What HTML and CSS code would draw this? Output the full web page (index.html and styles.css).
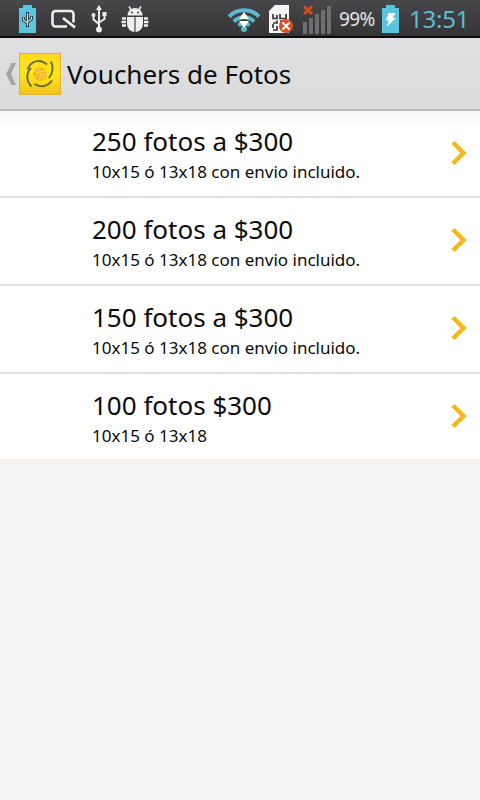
FILE: index.html
```html
<!DOCTYPE html>
<html lang="es">
<head>
  <meta charset="UTF-8">
  <meta name="viewport" content="width=device-width, initial-scale=1.0">
  <title>Vouchers de Fotos</title>
  <link rel="stylesheet" href="styles.css">
</head>
<body>

<div class="statusbar">
  <svg class="usb-battery" width="17" height="28" viewBox="0 0 17 28">
    <path d="M4 0h9v3h4v25H0V3h4z" fill="#5cc4dc"/>
    <g fill="none" stroke="#20363c" stroke-width="3"><path d="M8.500 7v15M4.500 12v3l4 3M12.500 11v3l-4 3"/></g>
    <g fill="none" stroke="#b9e6ee" stroke-width="1.200"><path d="M8.500 8v13M4.500 12.500V15l4 3M12.500 11.500V14l-4 3"/></g>
  </svg>
  <svg class="qmemo" width="26" height="20" viewBox="0 0 26 20">
    <path d="M16 17.500H4.500a3 3 0 0 1-3-3V5a3 3 0 0 1 3-3h15a3 3 0 0 1 3 3v8.500" fill="none" stroke="#eee" stroke-width="2.600"/>
    <path d="M12 9l12 9.500" stroke="#eee" stroke-width="2.800"/>
  </svg>
  <svg class="usb" width="16" height="28" viewBox="0 0 16 28">
    <path d="M8 4v20M2.500 10v4.500L8 19M13.500 9v5L8 17.500" fill="none" stroke="#eee" stroke-width="2"/>
    <path d="M8 0l3 5H5z" fill="#eee"/>
    <circle cx="2.500" cy="10" r="2" fill="#eee"/>
    <path d="M11.500 7h4v4h-4z" fill="#eee"/>
    <circle cx="8" cy="24.500" r="2.900" fill="#eee"/>
  </svg>
  <svg class="debug" width="28" height="27" viewBox="0 0 28 27">
    <path d="M6.500 9.500a7.500 7.500 0 0 1 15 0z" fill="#eee"/>
    <path d="M8 .5l2.500 4M20 .5l-2.500 4" stroke="#eee" stroke-width="1.500"/>
    <circle cx="11" cy="6.500" r="1" fill="#444"/><circle cx="17" cy="6.500" r="1" fill="#444"/>
    <path d="M6 11h16v7a8 8 0 0 1-16 0z" fill="#eee"/>
    <path d="M14 11v15" stroke="#444" stroke-width="1.200"/>
    <path d="M1 12.500h4M.5 16h4.500M1 19.500h4M23 12.500h4M23 16h4.500M23 19.500h4" stroke="#eee" stroke-width="2.300"/>
  </svg>
  <svg class="wifi" width="34" height="28" viewBox="0 0 34 28">
    <g fill="none" stroke="#5cb9cf" stroke-width="4">
      <path d="M2 11.500a21 21 0 0 1 30 0"/>
      <path d="M7 16.500a14 14 0 0 1 20 0"/>
      <path d="M11.500 20.500a8 8 0 0 1 11 0"/>
    </g>
    <circle cx="17" cy="24" r="3" fill="#5cb9cf"/>
    <path d="M17 7l5 7H12zM12 16h10l-5 7z" fill="#fff"/>
  </svg>
  <svg class="sim" width="24" height="29" viewBox="0 0 24 29">
    <path d="M6 0h14v28H0V6z" fill="#f4f4f4"/>
    <path d="M4 9v4.500h4V10M11 9v4.500h6V9M4 18h4v-2.500M11 16h6M4 19v4M8 21v4H4" fill="none" stroke="#38383b" stroke-width="1.700"/>
    <circle cx="17" cy="21" r="7" fill="#e24a22"/>
    <path d="M13.500 17.500l7 7M20.500 17.500l-7 7" stroke="#fff" stroke-width="2"/>
  </svg>
  <svg class="signal" width="28" height="29" viewBox="0 0 28 29">
    <path d="M0 17h4v12H0zM6 13h4v16H6zM12 9h4v20h-4zM18 5h4v24h-4zM24 1h4v28h-4z" fill="#6e6e70"/>
    <path d="M1 1.500l8 7.500M9 1.500L1 9" stroke="#df4a25" stroke-width="3"/>
  </svg>
  <span class="percent">99%</span>
  <svg class="battery" width="17" height="28" viewBox="0 0 17 28">
    <path d="M4 0h9v3h4v25H0V3h4z" fill="#5cc4dc"/>
    <path d="M6.500 8h7l-3 5H14L4.500 22l2.500-6.500H4z" fill="#fff"/>
  </svg>
  <span class="clock">13:51</span>
</div>

<header class="header">
  <svg class="back" width="10" height="22" viewBox="0 0 10 22">
    <path d="M5.500 0H10L5 11l5 11H5.500L0 11z" fill="#a5a4a6"/>
  </svg>
  <svg class="logo" width="42" height="42" viewBox="0 0 42 42">
    <defs>
      <linearGradient id="gold" x1="0" y1="0" x2="0" y2="1">
        <stop offset="0" stop-color="#ffd91f"/>
        <stop offset=".45" stop-color="#ffe817"/>
        <stop offset="1" stop-color="#f5c21c"/>
      </linearGradient>
    </defs>
    <rect x=".5" y=".5" width="41" height="41" fill="url(#gold)" stroke="#dfb52c"/>
    <circle cx="21" cy="21" r="6.800" fill="#f9b420"/>
    <path d="M20 14.500l-1 5 8-2M27.500 22l-6-1-1 6.500M15 25l4-4-4-4M23 22l2 4" fill="none" stroke="#ffe45a" stroke-width="1"/>
    <g fill="none" stroke="#6b6b3c" stroke-width="2">
      <path d="M32 8.500Q36 17 30 25"/>
      <path d="M33 27.500C29 33.500 21 35 15.500 31"/>
      <path d="M12.500 33.500C7 28 7 20 12 15"/>
      <path d="M8.500 16.500C11.500 8 21 5 28 11.500"/>
    </g>
  </svg>
  <h1>Vouchers de Fotos</h1>
</header>

<ul class="list">
  <li class="item">
    <div class="info">
      <h2>250 fotos a $300</h2>
      <p>10x15 ó 13x18 con envio incluido.</p>
    </div>
    <svg class="arrow" width="17" height="26" viewBox="0 0 17 26"><path d="M2 2.500L12.500 13 2 23.500"/></svg>
  </li>
  <li class="item">
    <div class="info">
      <h2>200 fotos a $300</h2>
      <p>10x15 ó 13x18 con envio incluido.</p>
    </div>
    <svg class="arrow" width="17" height="26" viewBox="0 0 17 26"><path d="M2 2.500L12.500 13 2 23.500"/></svg>
  </li>
  <li class="item">
    <div class="info">
      <h2>150 fotos a $300</h2>
      <p>10x15 ó 13x18 con envio incluido.</p>
    </div>
    <svg class="arrow" width="17" height="26" viewBox="0 0 17 26"><path d="M2 2.500L12.500 13 2 23.500"/></svg>
  </li>
  <li class="item">
    <div class="info">
      <h2>100 fotos $300</h2>
      <p>10x15 ó 13x18</p>
    </div>
    <svg class="arrow" width="17" height="26" viewBox="0 0 17 26"><path d="M2 2.500L12.500 13 2 23.500"/></svg>
  </li>
</ul>

</body>
</html>
```
FILE: styles.css
```css
* {
  box-sizing: border-box;
}
body {
  margin: 0;
  min-height: 100vh;
  font-family: "Noto Sans", "Open Sans", sans-serif;
  color: #0b0b0b;
  background-color: #f5f4f2;
}
h1, h2, p, ul {
  margin: 0;
  padding: 0;
  font-weight: normal;
}
svg {
  display: block;
  flex: none;
}

/* Status bar */
.statusbar {
  display: flex;
  align-items: center;
  height: 38px;
  padding: 2px 0 0 19px;
  background: linear-gradient(#48484b, #343437);
  border-bottom: 2px solid #0c0c0c;
}
.qmemo {
  margin-left: 15px;
}
.usb {
  margin-left: 14px;
}
.debug {
  margin-left: 14px;
}
.wifi {
  margin-left: 78px;
}
.sim {
  margin-left: 8px;
}
.signal {
  margin-left: 10px;
}
.percent {
  width: 37px;
  margin-left: 8px;
  color: #e4e4e4;
  font-size: 19px;
  letter-spacing: -0.6px;
}
.battery {
  margin-left: 6px;
}
.clock {
  margin-left: 10px;
  padding-bottom: 2px;
  color: #5cbcd3;
  font-size: 24px;
  letter-spacing: -0.2px;
}

/* Title bar */
.header {
  display: flex;
  align-items: center;
  height: 73px;
  padding: 0 0 0 6px;
  background: linear-gradient(#dfdee0, #dbdadc);
  border-bottom: 2px solid #bdbcbe;
}
.logo {
  margin-left: 3px;
}
.header h1 {
  margin-left: 6px;
  font-size: 26px;
  white-space: nowrap;
}

/* Voucher list */
.list {
  list-style: none;
}
.item {
  display: flex;
  align-items: center;
  justify-content: space-between;
  height: 88px;
  padding: 0 12px 2px 92px;
  background-color: #fff;
  border-bottom: 2px solid #dfdde0;
}
.item:first-child {
  height: 87px;
  background: linear-gradient(#f6f5f7, #fff 14px);
}
.item:last-child {
  height: 85px;
  padding-bottom: 1px;
  border-bottom: none;
}
.info {
  padding-top: 4px;
}
.info h2 {
  font-size: 26px;
  line-height: 34px;
}
.info p {
  font-size: 17px;
  line-height: 27px;
}
.arrow path {
  fill: none;
  stroke: #f2b91d;
  stroke-width: 4.5;
}
```
